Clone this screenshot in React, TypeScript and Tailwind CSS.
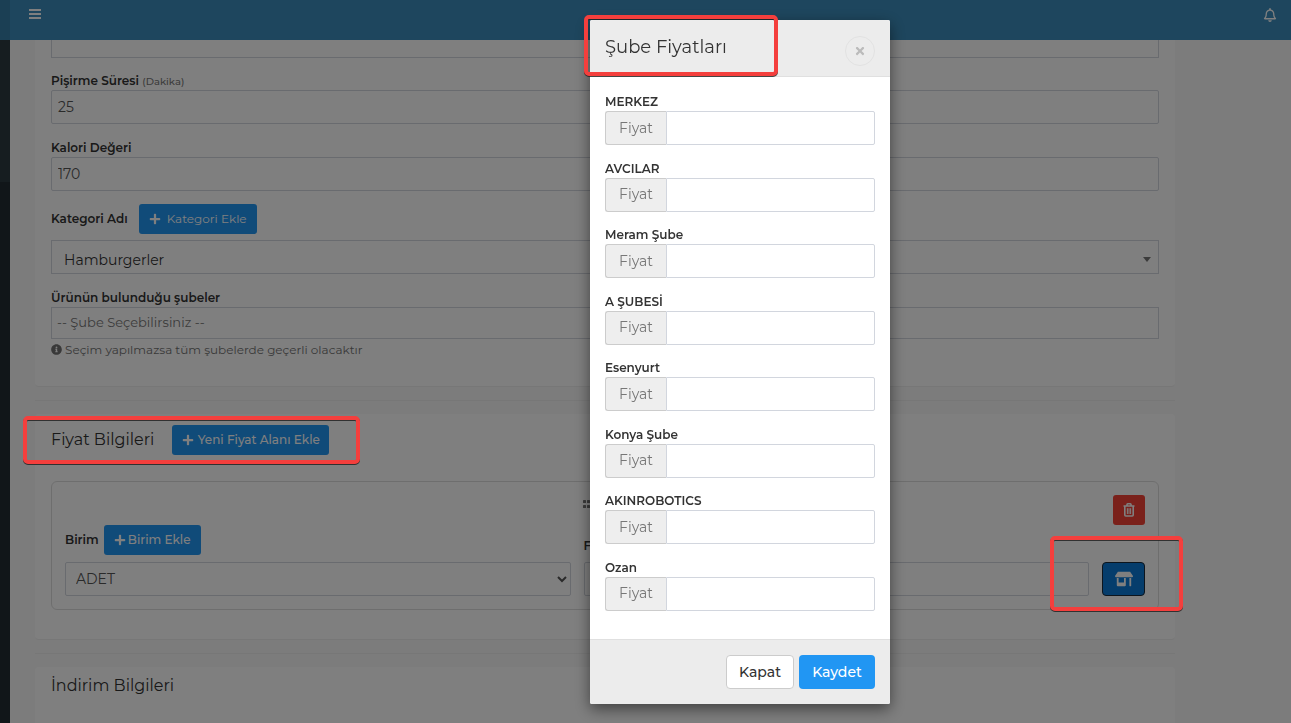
import type { ReactNode } from 'react';
import { FaInfoCircle, FaPlus, FaRegBell, FaStoreAlt, FaTimes } from 'react-icons/fa';

const branches = [
  'MERKEZ',
  'AVCILAR',
  'Meram Şube',
  'A ŞUBESİ',
  'Esenyurt',
  'Konya Şube',
  'AKINROBOTICS',
  'Ozan',
];

const labelClass = 'block pb-[2px] text-[12px] leading-[15px] font-semibold text-[#333]';
const fieldClass =
  'block w-full h-[34px] rounded-[2px] border border-[#d2d6de] bg-white text-[14px] text-[#555] outline-none';

function AddButton({ children, className }: { children: ReactNode; className: string }) {
  return (
    <button
      type="button"
      className={`flex h-[30px] shrink-0 items-center justify-center rounded-[3px] bg-[#2196f3] text-[12px] whitespace-nowrap text-white ${className}`}
    >
      <FaPlus className="size-3 shrink-0" />
      {children}
    </button>
  );
}

function Highlight({ className }: { className: string }) {
  return (
    <div
      className={`pointer-events-none absolute z-50 rounded-[5px] border-4 border-[#f43f3d] drop-shadow-[0_1px_0_rgba(30,30,30,0.8)] ${className}`}
    />
  );
}

function MenuIcon() {
  return (
    <svg viewBox="0 0 12 10" className="h-[10px] w-3" fill="currentColor">
      <rect width="12" height="2" />
      <rect y="4" width="12" height="2" />
      <rect y="8" width="12" height="2" />
    </svg>
  );
}

function TrashIcon() {
  return (
    <svg viewBox="0 0 12 14" className="h-[14px] w-3" fill="none" stroke="currentColor">
      <path d="M0.5 3h11M4 3V1.5q0-.7.7-.7h2.6q.7 0 .7.7V3M1.8 3v9q0 1 1 1h6.4q1 0 1-1V3" strokeWidth="1.6" />
      <path d="M4.4 5.2v5.8M6 5.2v5.8M7.6 5.2v5.8" strokeWidth="1" />
    </svg>
  );
}

function GripIcon() {
  return (
    <svg viewBox="0 0 16 10" className="h-[10px] w-4" fill="currentColor">
      {[0, 4, 8, 12].map((x) => (
        <g key={x}>
          <rect x={x} y="1" width="3" height="3" rx="0.5" />
          <rect x={x} y="6" width="3" height="3" rx="0.5" />
        </g>
      ))}
    </svg>
  );
}

function TopBar() {
  return (
    <header className="flex h-10 shrink-0 bg-[#3c8dbc] text-white">
      <div className="w-[10px] bg-[#367fa9]" />
      <div className="flex flex-1 items-start justify-between pt-2 pr-[14px] pl-[19px]">
        <button type="button" aria-label="Menü" className="pt-px">
          <MenuIcon />
        </button>
        <button type="button" aria-label="Bildirimler">
          <FaRegBell className="size-[14px]" />
        </button>
      </div>
    </header>
  );
}

function ProductCard() {
  return (
    <section className="rounded-b-[4px] border-b border-[#eee] bg-white px-4 pb-7">
      <textarea
        aria-label="Açıklama"
        className="block h-[18px] w-full resize-none border border-t-0 border-[#d2d6de] outline-none"
      />
      <div className="mt-[15px]">
        <label htmlFor="cook" className={labelClass}>
          Pişirme Süresi <small className="text-[10px] leading-none font-medium text-[#777]">(Dakika)</small>
        </label>
        <input id="cook" defaultValue="25" className={`${fieldClass} px-[6px]`} />
      </div>
      <div className="mt-4">
        <label htmlFor="calorie" className={labelClass}>
          Kalori Değeri
        </label>
        <input id="calorie" defaultValue="170" className={`${fieldClass} px-[6px]`} />
      </div>
      <div className="mt-[13px] flex items-center gap-[11px]">
        <label htmlFor="category" className={labelClass}>
          Kategori Adı
        </label>
        <AddButton className="w-[118px] gap-[6px]">Kategori Ekle</AddButton>
      </div>
      <div className="relative mt-[6px]">
        <select id="category" className={`${fieldClass} appearance-none rounded-none pt-[6px] pl-3 !text-[#333]`}>
          <option>Hamburgerler</option>
        </select>
        <svg
          viewBox="0 0 8 5"
          className="pointer-events-none absolute top-[17px] right-2 h-[5px] w-2 text-[#777]"
          fill="currentColor"
        >
          <path d="M0 0h8L4 5z" />
        </svg>
      </div>
      <label htmlFor="branches" className={`${labelClass} mt-4`}>
        Ürünün bulunduğu şubeler
      </label>
      <input
        id="branches"
        placeholder="-- Şube Seçebilirsiniz --"
        className={`${fieldClass} !h-8 rounded-none px-[5px] pb-[2px] !text-[13px] placeholder:text-[#777]`}
      />
      <p className="mt-[2px] flex items-center gap-[3px] text-[12px] leading-[17px] text-[#737373]">
        <FaInfoCircle className="size-[11px]" />
        Seçim yapılmazsa tüm şubelerde geçerli olacaktır
      </p>
    </section>
  );
}

function PriceCard() {
  return (
    <section className="relative rounded-[4px] border-b border-[#eee] bg-white px-4 pt-[11px] pb-[29px]">
      <Highlight className="top-[2px] -left-3 h-12 w-[337px]" />
      <div className="flex items-center gap-[18px]">
        <h2 className="text-[16px] text-[#333]">Fiyat Bilgileri</h2>
        <AddButton className="w-[157px] gap-1 font-medium">Yeni Fiyat Alanı Ekle</AddButton>
      </div>
      <div className="relative mt-[26px] rounded-[6px] border border-[#ddd] px-[13px] py-[13px]">
        <Highlight className="top-[54px] -right-[25px] h-[75px] w-[133px]" />
        <div className="flex h-[30px] items-start justify-between">
          <span className="w-8" />
          <span className="w-[44px] pt-1 text-[#777]">
            <GripIcon />
          </span>
          <button
            type="button"
            aria-label="Sil"
            className="flex h-[30px] w-8 items-center justify-center rounded-[3px] bg-[#f44336] pb-px text-white"
          >
            <TrashIcon />
          </button>
        </div>
        <div className="flex items-end gap-[13px]">
          <div className="flex-1">
            <div className="mb-[7px] flex h-[30px] items-center gap-[5px]">
              <label htmlFor="unit" className={labelClass}>
                Birim
              </label>
              <AddButton className="w-[97px] gap-[2px] font-medium">Birim Ekle</AddButton>
            </div>
            <select id="unit" className={`${fieldClass} px-[6px]`}>
              <option>ADET</option>
            </select>
          </div>
          <div className="flex-1">
            <label htmlFor="price" className={`${labelClass} mb-[7px]`}>
              Fiyat
            </label>
            <input id="price" className={`${fieldClass} px-[6px]`} />
          </div>
          <button
            type="button"
            aria-label="Şube fiyatları"
            className="flex h-[34px] w-[43px] items-center justify-center rounded-[4px] border border-[#1a2a3a] bg-[#0b7bd8] text-white"
          >
            <FaStoreAlt className="size-[18px]" />
          </button>
        </div>
      </div>
    </section>
  );
}

function BranchPriceModal() {
  return (
    <div className="fixed inset-0 z-40 flex items-start justify-center overflow-hidden bg-black/50 pt-5 pl-[189px]">
      <div
        role="dialog"
        aria-labelledby="modal-title"
        className="relative w-[300px] rounded-[2px] bg-white text-[#333] shadow-[0_5px_15px_rgba(0,0,0,0.5)]"
      >
        <Highlight className="-top-[5px] -left-[6px] h-[61px] w-[194px]" />
        <div className="flex h-[57px] items-center justify-between rounded-t-[2px] border-b border-[#e0e0e0] bg-[#ececec] px-[15px]">
          <h2 id="modal-title" className="pb-[2px] text-[18px]">
            Şube Fiyatları
          </h2>
          <button
            type="button"
            aria-label="Kapat"
            className="mt-[5px] flex size-[30px] items-center justify-center rounded-full border border-[#e2e2e2] text-[#bbb]"
          >
            <FaTimes className="size-3" />
          </button>
        </div>
        <div className="flex min-h-[562px] flex-col px-[15px] pt-[17px] pb-7">
          <div className="flex flex-1 flex-col justify-between">
            {branches.map((branch, i) => (
              <div key={branch}>
                <label htmlFor={`branch-${i}`} className={labelClass}>
                  {branch}
                </label>
                <div className="flex h-[34px]">
                  <span className="flex w-[61px] items-center justify-center rounded-l-[3px] border border-r-0 border-[#ccc] bg-[#eee] text-[14px] text-[#777]">
                    Fiyat
                  </span>
                  <input
                    id={`branch-${i}`}
                    className="h-full min-w-0 flex-1 rounded-r-[2px] border border-[#d2d6de] px-2 text-[14px] outline-none"
                  />
                </div>
              </div>
            ))}
          </div>
        </div>
        <div className="flex justify-end gap-[5px] rounded-b-[2px] border-t border-[#e0e0e0] bg-[#ececec] p-[15px] text-[14px] font-medium">
          <button type="button" className="h-[34px] w-[68px] rounded-[4px] border border-[#ccc] bg-white">
            Kapat
          </button>
          <button type="button" className="h-[34px] w-[76px] rounded-[4px] bg-[#2196f3] text-white">
            Kaydet
          </button>
        </div>
      </div>
    </div>
  );
}

export default function App() {
  return (
    <div className="flex h-screen flex-col overflow-hidden bg-[#f8f8f8] font-['Montserrat','Inter',sans-serif]">
      <TopBar />
      <div className="flex min-h-0 flex-1">
        <aside className="w-[10px] shrink-0 bg-[#222d32]">
          <div className="h-[142px] bg-[#2c3b41]" />
        </aside>
        <main className="min-w-0 flex-1 px-[25px]">
          <div className="max-w-[1140px]">
            <ProductCard />
            <hr className="my-[13px] border-[#eee]" />
            <PriceCard />
            <hr className="my-[13px] border-[#eee]" />
            <section className="rounded-[4px] bg-white px-4 pt-[7px] pb-[60px]">
              <h2 className="text-[16px] text-[#333]">İndirim Bilgileri</h2>
            </section>
          </div>
        </main>
      </div>
      <BranchPriceModal />
    </div>
  );
}
